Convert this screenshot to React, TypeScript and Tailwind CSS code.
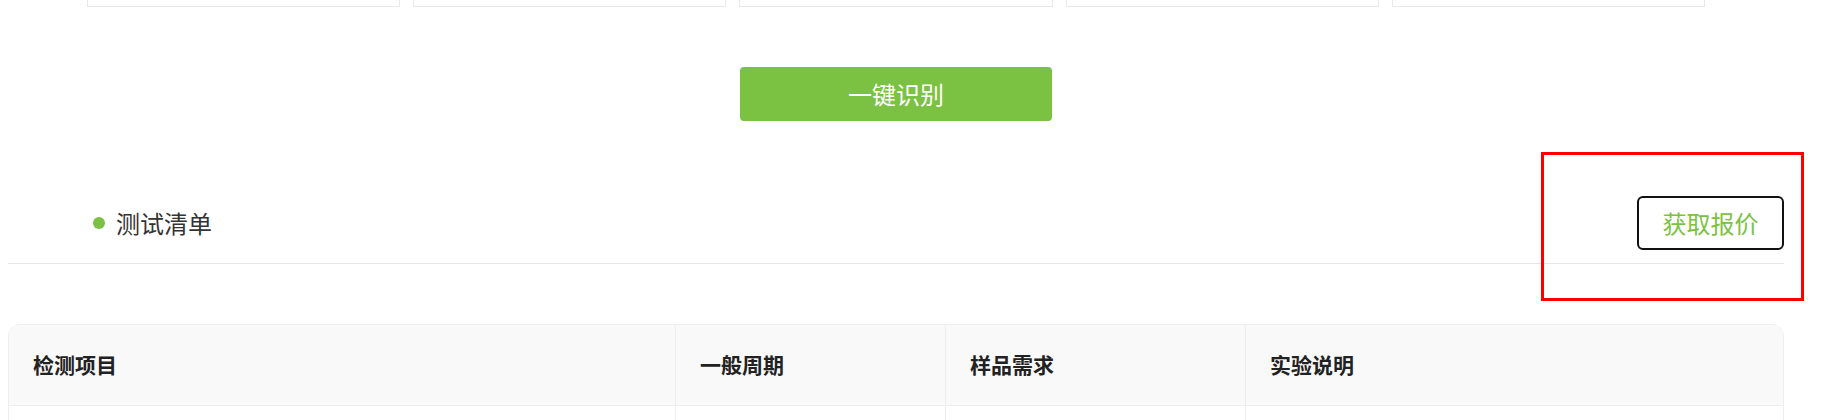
const boxes = [0, 1, 2, 3, 4];

const columns = [
  { title: "检测项目", width: "w-[666px]" },
  { title: "一般周期", width: "w-[270px]" },
  { title: "样品需求", width: "w-[300px]" },
  { title: "实验说明", width: "flex-1" },
];

export default function App() {
  return (
    <div
      className="relative h-[420px] w-[1822px] overflow-hidden bg-white"
      style={{ fontFamily: '"Noto Sans CJK SC", "Noto Sans", sans-serif' }}
    >
      <div className="ml-[8px] w-[1776px]">
        {/* upload slots, scrolled mostly out of view */}
        <div className="mt-[-100px] grid grid-cols-5 gap-[13px] px-[79px]">
          {boxes.map((b) => (
            <div key={b} className="h-[107px] border border-[#e8e8e8] bg-white" />
          ))}
        </div>

        <div className="mt-[60px] flex justify-center">
          <button className="h-[54px] w-[312px] rounded-[4px] bg-[#7bc142] text-[24px] text-white">
            一键识别
          </button>
        </div>

        <div className="mt-[75px] flex items-center justify-between border-b border-[#e5e5e5] pb-[13px]">
          <div className="flex items-center pl-[85px]">
            <span className="h-[12px] w-[12px] rounded-full bg-[#7bc142]" />
            <span className="ml-[11px] text-[24px] leading-none text-[#333]">测试清单</span>
          </div>
          <button className="h-[54px] w-[147px] rounded-[6px] border-2 border-[#111] text-[24px] text-[#7bc142]">
            获取报价
          </button>
        </div>

        <div className="mt-[60px] overflow-hidden rounded-t-[12px] border border-[#eeeeee]">
          <div className="flex h-[81px] border-b border-[#eeeeee] bg-[#f9f9f9]">
            {columns.map((c, i) => (
              <div
                key={c.title}
                className={`${c.width} flex items-center pl-[24px] text-[21px] font-bold text-[#222] ${
                  i > 0 ? "border-l border-[#eeeeee]" : ""
                }`}
              >
                {c.title}
              </div>
            ))}
          </div>
          <div className="flex h-[60px]">
            {columns.map((c, i) => (
              <div
                key={c.title}
                className={`${c.width} ${i > 0 ? "border-l border-[#eeeeee]" : ""}`}
              />
            ))}
          </div>
        </div>
      </div>

      {/* annotation frame */}
      <div className="pointer-events-none absolute left-[1541px] top-[152px] h-[149px] w-[263px] border-[3px] border-[#ff0000]" />
    </div>
  );
}
